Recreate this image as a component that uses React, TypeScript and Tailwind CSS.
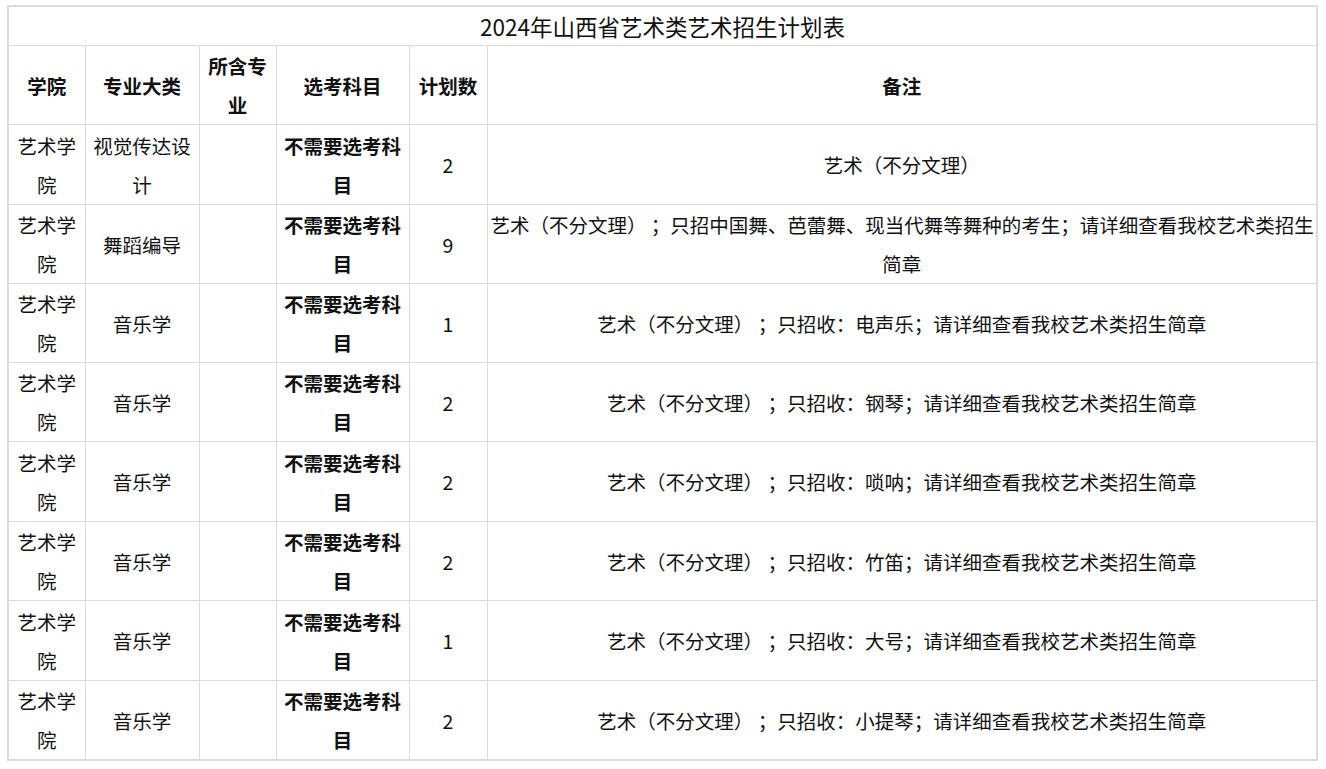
const rows = [
  { major: ["视觉传达设", "计"], num: "2", note: ["艺术（不分文理）"], h: "h-[80px]" },
  {
    major: ["舞蹈编导"],
    num: "9",
    note: ["艺术（不分文理） ；只招中国舞、芭蕾舞、现当代舞等舞种的考生；请详细查看我校艺术类招生", "简章"],
    h: "h-[79px]",
  },
  { major: ["音乐学"], num: "1", note: ["艺术（不分文理） ；只招收：电声乐；请详细查看我校艺术类招生简章"], h: "h-[79px]" },
  { major: ["音乐学"], num: "2", note: ["艺术（不分文理） ；只招收：钢琴；请详细查看我校艺术类招生简章"], h: "h-[79px]" },
  { major: ["音乐学"], num: "2", note: ["艺术（不分文理） ；只招收：唢呐；请详细查看我校艺术类招生简章"], h: "h-[80px]" },
  { major: ["音乐学"], num: "2", note: ["艺术（不分文理） ；只招收：竹笛；请详细查看我校艺术类招生简章"], h: "h-[79px]" },
  { major: ["音乐学"], num: "1", note: ["艺术（不分文理） ；只招收：大号；请详细查看我校艺术类招生简章"], h: "h-[80px]" },
  { major: ["音乐学"], num: "2", note: ["艺术（不分文理） ；只招收：小提琴；请详细查看我校艺术类招生简章"], h: "h-[79px]" },
];

function Lines({ parts }: { parts: string[] }) {
  return (
    <>
      {parts.map((p, i) => (
        <span key={i} className="block whitespace-pre">
          {p}
        </span>
      ))}
    </>
  );
}

const cell = "border border-[#dbdbdb] px-[3px] py-0 text-center align-middle";

export default function App() {
  return (
    <div
      className="min-h-screen bg-white pl-[7px] pt-[5px] text-[19.5px] leading-[39px] text-[#111]"
      style={{ fontFamily: '"Microsoft YaHei", "Noto Sans CJK SC", "Noto Sans", sans-serif' }}
    >
      <table className="w-[1311px] table-fixed border-collapse border-2 border-[#dbdbdb]">
        <colgroup>
          <col className="w-[77px]" />
          <col className="w-[114px]" />
          <col className="w-[77px]" />
          <col className="w-[133px]" />
          <col className="w-[78px]" />
          <col />
        </colgroup>
        <tbody>
          <tr className="h-[39px]">
            <td colSpan={6} className={`${cell} text-[22.5px] leading-[38px]`}>
              2024年山西省艺术类艺术招生计划表
            </td>
          </tr>
          <tr className="h-[79px] font-bold">
            <td className={cell}>学院</td>
            <td className={cell}>专业大类</td>
            <td className={cell}>
              <Lines parts={["所含专", "业"]} />
            </td>
            <td className={cell}>选考科目</td>
            <td className={cell}>计划数</td>
            <td className={cell}>备注</td>
          </tr>
          {rows.map((r, i) => (
            <tr key={i} className={r.h}>
              <td className={cell}>
                <Lines parts={["艺术学", "院"]} />
              </td>
              <td className={cell}>
                <Lines parts={r.major} />
              </td>
              <td className={cell}></td>
              <td className={`${cell} font-bold`}>
                <Lines parts={["不需要选考科", "目"]} />
              </td>
              <td className={cell}>{r.num}</td>
              <td className={cell}>
                <Lines parts={r.note} />
              </td>
            </tr>
          ))}
        </tbody>
      </table>
    </div>
  );
}
